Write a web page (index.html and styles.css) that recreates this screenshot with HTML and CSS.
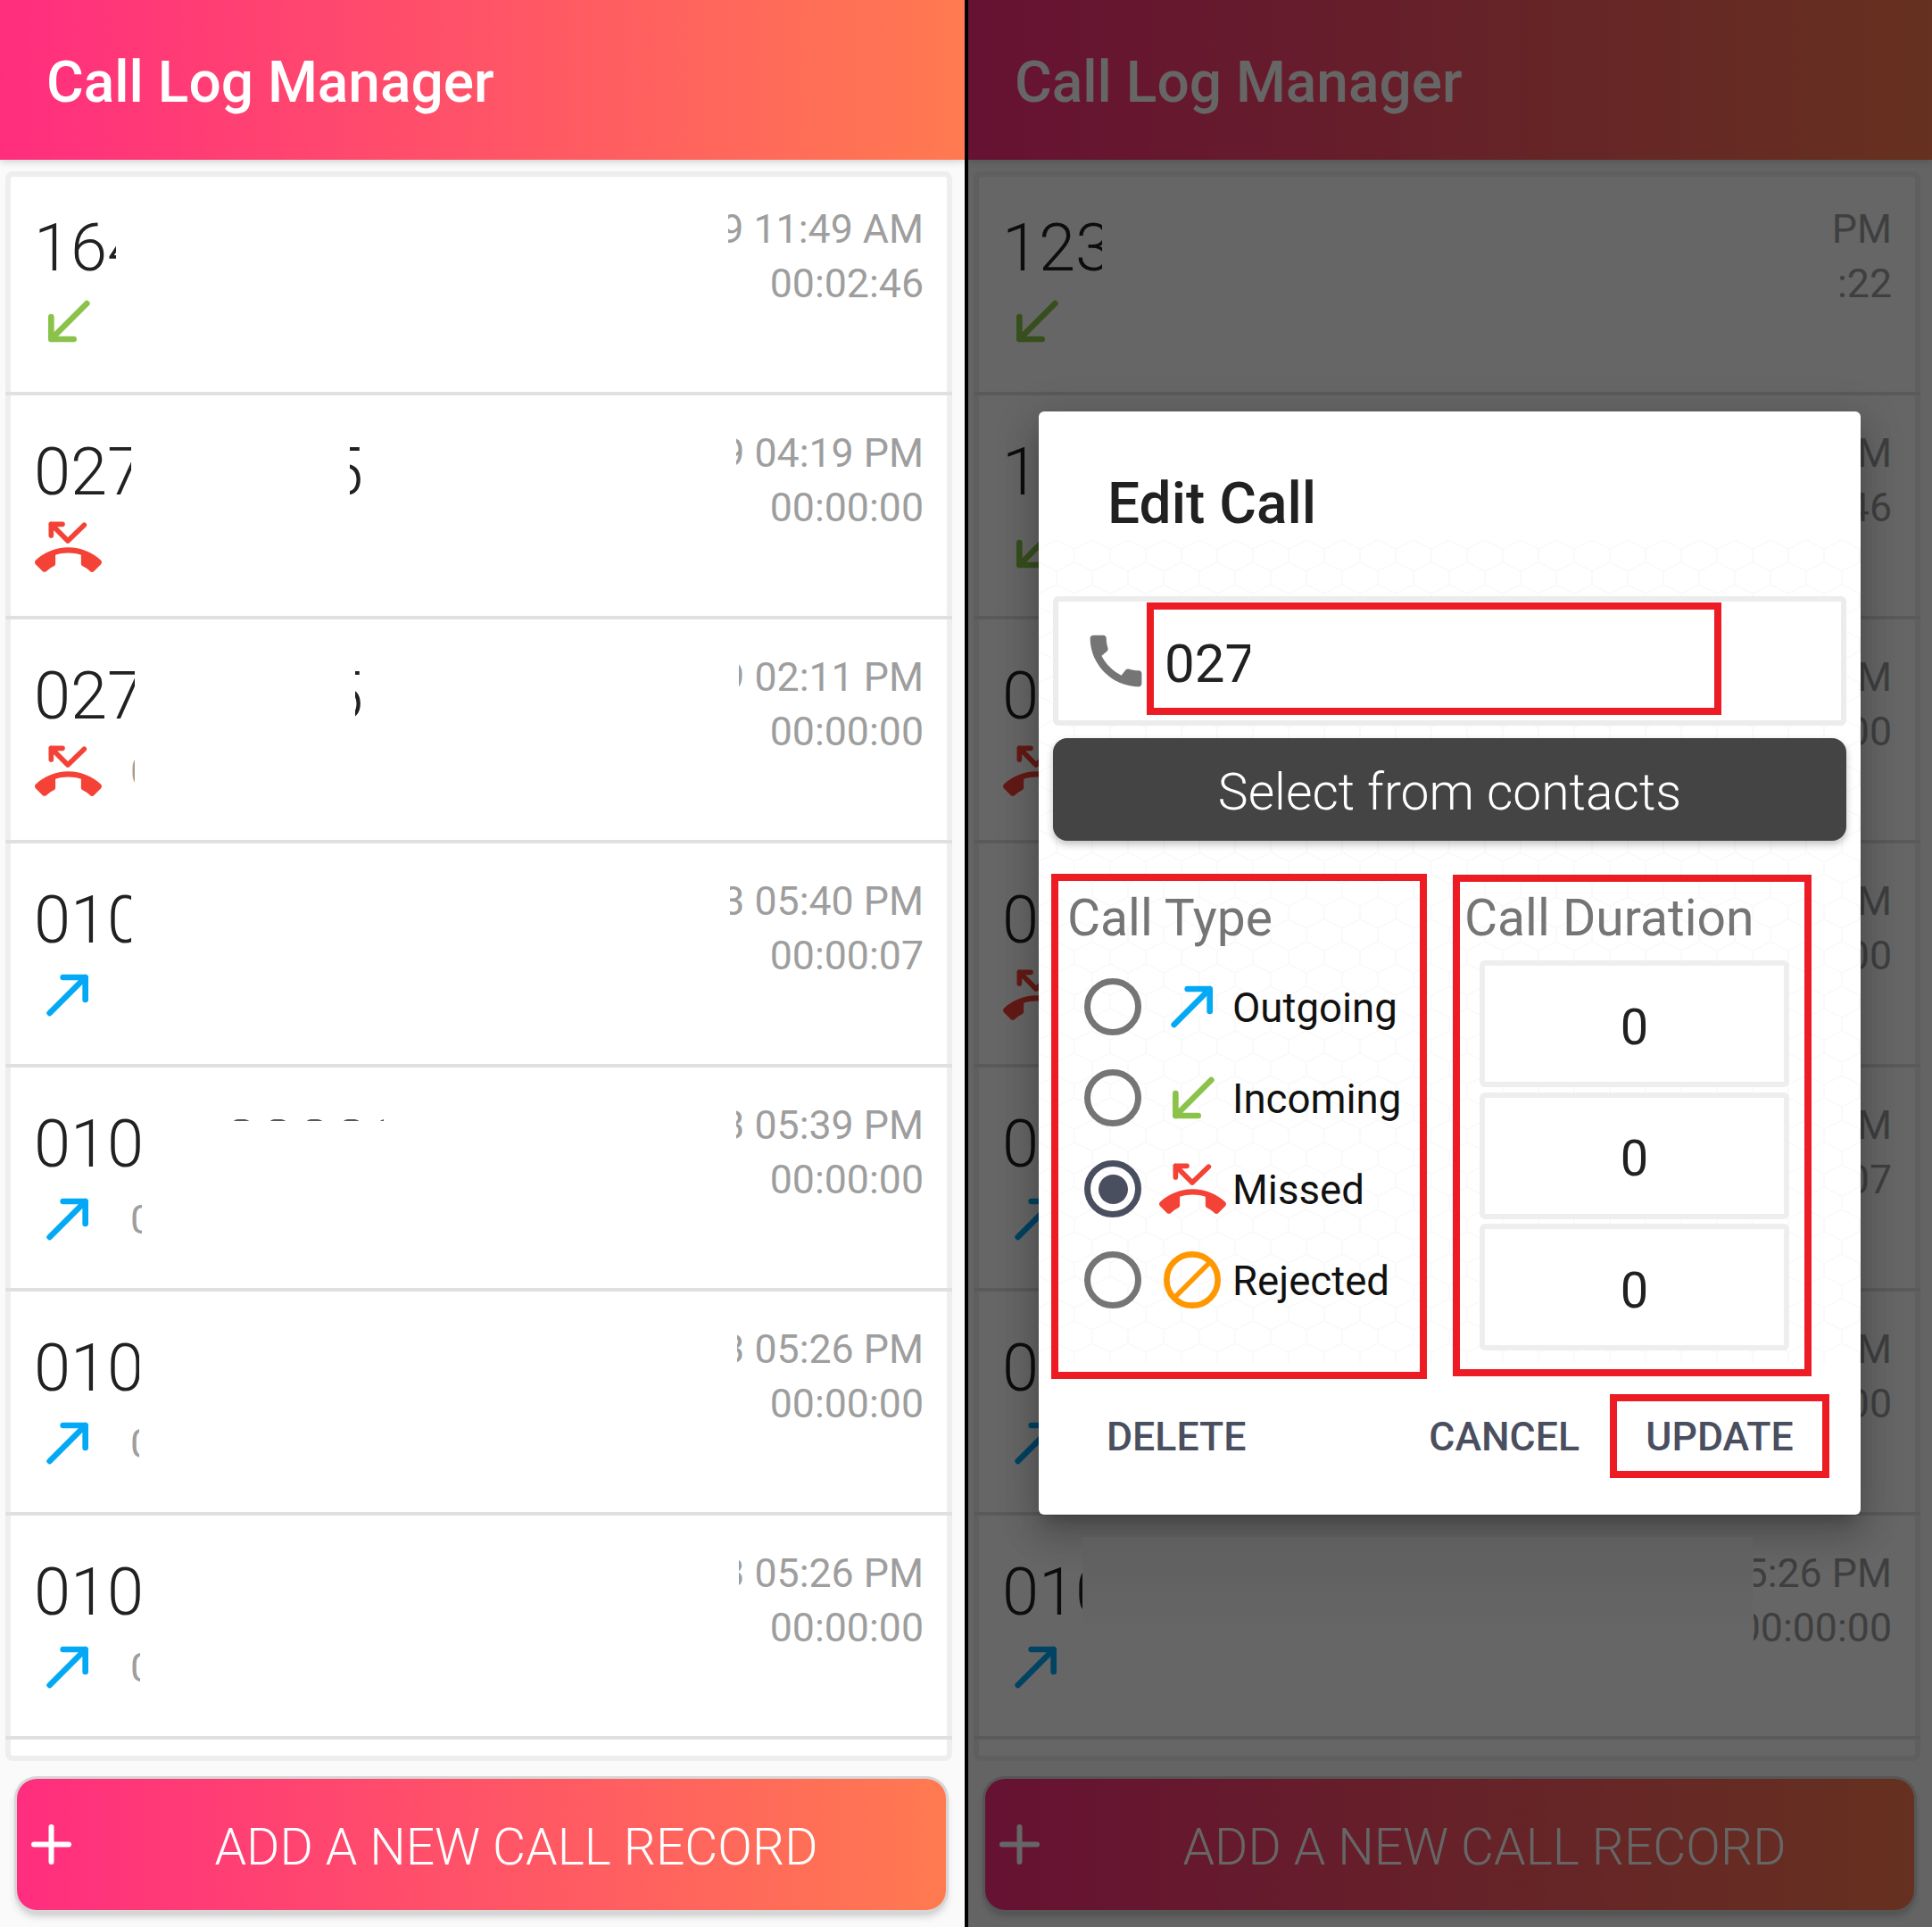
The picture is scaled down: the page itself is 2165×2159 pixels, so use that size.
FILE: index.html
```html
<!DOCTYPE html>
<html lang="en">
<head>
  <meta charset="UTF-8">
  <title>Call Log Manager</title>
  <link rel="stylesheet" href="styles.css">
</head>
<body>
  <svg class="sprite">
    <symbol id="ic-out" viewBox="108 109 240 192">
      <path d="M167 265L287 145M212 145H287V220" fill="none" stroke="#03a9f4" stroke-width="20" stroke-linecap="round" stroke-linejoin="round"/>
    </symbol>
    <symbol id="ic-in" viewBox="108 409 240 192">
      <path d="M292 445L172 565M172 490V565H248" fill="none" stroke="#8bc34a" stroke-width="20" stroke-linecap="round" stroke-linejoin="round"/>
    </symbol>
    <symbol id="ic-missed" viewBox="108 718 240 192">
      <path d="M172 775V737H210M172 737L228 793L283 740" fill="none" stroke="#f44336" stroke-width="17" stroke-linecap="round" stroke-linejoin="round"/>
      <path transform="translate(117 749) scale(9.375)" fill="#f44336" d="M12 9c-1.6 0-3.15.25-4.6.72v3.1c0 .39-.23.74-.56.9-.98.49-1.87 1.12-2.66 1.85-.18.18-.43.28-.7.28-.28 0-.53-.11-.71-.29L.29 13.08c-.18-.17-.29-.42-.29-.7 0-.28.11-.53.29-.71C3.34 8.78 7.46 7 12 7s8.66 1.78 11.71 4.67c.18.18.29.43.29.71 0 .28-.11.53-.29.71l-2.48 2.48c-.18.18-.43.29-.71.29-.27 0-.52-.11-.7-.28-.79-.74-1.69-1.36-2.67-1.85-.33-.16-.56-.5-.56-.9v-3.1C15.15 9.25 13.6 9 12 9z"/>
    </symbol>
    <symbol id="ic-rejected" viewBox="109 1024 240 192">
      <circle cx="229" cy="1120" r="86" fill="none" stroke="#ff9800" stroke-width="20"/>
      <path d="M172 1177L286 1063" fill="none" stroke="#ff9800" stroke-width="16"/>
    </symbol>
    <symbol id="ic-plus" viewBox="0 0 45 45">
      <path d="M22.5 3V42M3 22.5H42" fill="none" stroke="#fff" stroke-width="6" stroke-linecap="round"/>
    </symbol>
  </svg>

  <div class="screens">
    <!-- list screen -->
    <section class="panel">
      <header class="app-bar">Call Log Manager</header>
      <div class="list">
        <div class="list-inner">
          <div class="row">
            <div class="caller w93">
              <div class="num">164</div>
              <div class="sub"><svg class="ic"><use href="#ic-in"/></svg></div>
            </div>
            <div class="time t219"><div>9 11:49 AM</div><div>00:02:46</div></div>
          </div>
          <div class="row">
            <div class="caller w110">
              <div class="num">027</div>
              <div class="sub"><svg class="ic"><use href="#ic-missed"/></svg></div>
            </div>
            <div class="frag f15">5</div>
            <div class="time t210"><div>9 04:19 PM</div><div>00:00:00</div></div>
          </div>
          <div class="row">
            <div class="caller w114">
              <div class="num">027</div>
              <div class="sub"><svg class="ic"><use href="#ic-missed"/></svg><span class="sub-text">0</span></div>
            </div>
            <div class="frag f9">5</div>
            <div class="time t207"><div>9 02:11 PM</div><div>00:00:00</div></div>
          </div>
          <div class="row">
            <div class="caller w110">
              <div class="num">010</div>
              <div class="sub"><svg class="ic"><use href="#ic-out"/></svg></div>
            </div>
            <div class="time t217"><div>3 05:40 PM</div><div>00:00:07</div></div>
          </div>
          <div class="row">
            <div class="caller w122">
              <div class="num">010</div>
              <div class="sub"><svg class="ic"><use href="#ic-out"/></svg><span class="sub-text">0</span></div>
            </div>
            <div class="tops"><div class="tops-text">00000</div></div>
            <div class="time t210"><div>3 05:39 PM</div><div>00:00:00</div></div>
          </div>
          <div class="row">
            <div class="caller w119">
              <div class="num">010</div>
              <div class="sub"><svg class="ic"><use href="#ic-out"/></svg><span class="sub-text">0</span></div>
            </div>
            <div class="time t209"><div>3 05:26 PM</div><div>00:00:00</div></div>
          </div>
          <div class="row">
            <div class="caller w120">
              <div class="num">010</div>
              <div class="sub"><svg class="ic"><use href="#ic-out"/></svg><span class="sub-text">0</span></div>
            </div>
            <div class="time t207"><div>3 05:26 PM</div><div>00:00:00</div></div>
          </div>
        </div>
      </div>
      <button class="add-btn">
        <svg class="add-plus"><use href="#ic-plus"/></svg>
        <span class="add-label">ADD A NEW CALL RECORD</span>
      </button>
    </section>

    <div class="split"></div>

    <!-- same screen with the edit dialog open -->
    <section class="panel">
      <header class="app-bar">Call Log Manager</header>
      <div class="list">
        <div class="list-inner">
          <div class="row">
            <div class="caller w113">
              <div class="num">123</div>
              <div class="sub"><svg class="ic"><use href="#ic-in"/></svg></div>
            </div>
            <div class="time t80"><div>PM</div><div>:22</div></div>
          </div>
          <div class="row">
            <div class="caller w110">
              <div class="num">1</div>
              <div class="sub"><svg class="ic"><use href="#ic-in"/></svg></div>
            </div>
            <div class="time t80"><div>PM</div><div>:46</div></div>
          </div>
          <div class="row">
            <div class="caller w110">
              <div class="num">0</div>
              <div class="sub"><svg class="ic"><use href="#ic-missed"/></svg></div>
            </div>
            <div class="time t80"><div>PM</div><div>:00</div></div>
          </div>
          <div class="row">
            <div class="caller w110">
              <div class="num">0</div>
              <div class="sub"><svg class="ic"><use href="#ic-missed"/></svg></div>
            </div>
            <div class="time t80"><div>PM</div><div>:00</div></div>
          </div>
          <div class="row">
            <div class="caller w110">
              <div class="num">0</div>
              <div class="sub"><svg class="ic"><use href="#ic-out"/></svg></div>
            </div>
            <div class="time t80"><div>PM</div><div>:07</div></div>
          </div>
          <div class="row">
            <div class="caller w110">
              <div class="num">0</div>
              <div class="sub"><svg class="ic"><use href="#ic-out"/></svg></div>
            </div>
            <div class="time t80"><div>PM</div><div>:00</div></div>
          </div>
          <div class="row">
            <div class="caller w91">
              <div class="num">010</div>
              <div class="sub"><svg class="ic"><use href="#ic-out"/></svg></div>
            </div>
            <div class="time t155"><div>05:26 PM</div><div>00:00:00</div></div>
          </div>
        </div>
      </div>
      <button class="add-btn">
        <svg class="add-plus"><use href="#ic-plus"/></svg>
        <span class="add-label">ADD A NEW CALL RECORD</span>
      </button>

      <div class="scrim">
        <div class="dialog">
          <svg class="hex-bg" width="921" height="922">
            <defs>
              <pattern id="hex" width="40" height="50" patternUnits="userSpaceOnUse">
                <path d="M0 10L20 0L40 10M0 10V25M40 10V25M0 25L20 35L40 25M20 35V50" fill="none" stroke="#f9f9f9" stroke-width="1.5"/>
              </pattern>
            </defs>
            <rect width="921" height="922" fill="url(#hex)"/>
          </svg>

          <h2 class="dialog-title">Edit Call</h2>

          <div class="phone-card">
            <svg class="phone-ic" viewBox="0 0 24 24"><path fill="#757575" d="M20.01 15.38c-1.23 0-2.42-.2-3.53-.56-.35-.12-.74-.03-1.01.24l-1.57 1.97c-2.83-1.35-5.48-3.9-6.89-6.83l1.95-1.66c.27-.28.35-.67.24-1.02-.37-1.11-.56-2.3-.56-3.53 0-.54-.45-.99-.99-.99H4.19C3.65 3 3 3.24 3 3.99 3 13.28 10.73 21 20.01 21c.71 0 .99-.63.99-1.18v-3.45c0-.54-.45-.99-.99-.99z"/></svg>
            <div class="phone-input mark"><span class="phone-num">027</span></div>
          </div>

          <button class="contacts-btn">Select from contacts</button>

          <div class="columns">
            <div class="type-col mark">
              <div class="col-label">Call Type</div>
              <div class="type-list">
                <div class="type-row">
                  <span class="radio"></span>
                  <svg class="ic"><use href="#ic-out"/></svg>
                  <span class="type-name">Outgoing</span>
                </div>
                <div class="type-row">
                  <span class="radio"></span>
                  <svg class="ic"><use href="#ic-in"/></svg>
                  <span class="type-name">Incoming</span>
                </div>
                <div class="type-row">
                  <span class="radio radio-on"></span>
                  <svg class="ic"><use href="#ic-missed"/></svg>
                  <span class="type-name">Missed</span>
                </div>
                <div class="type-row">
                  <span class="radio"></span>
                  <svg class="ic"><use href="#ic-rejected"/></svg>
                  <span class="type-name">Rejected</span>
                </div>
              </div>
            </div>
            <div class="dur-col mark">
              <div class="col-label">Call Duration</div>
              <div class="dur-list">
                <div class="dur-box">0</div>
                <div class="dur-box">0</div>
                <div class="dur-box">0</div>
              </div>
            </div>
          </div>

          <div class="actions">
            <span class="action action-delete">DELETE</span>
            <span class="action action-cancel">CANCEL</span>
            <span class="action action-update mark">UPDATE</span>
          </div>
        </div>
        <div class="patch"></div>
      </div>
    </section>
  </div>
</body>
</html>
```

FILE: styles.css
```css
* { box-sizing: border-box; }
html, body { margin: 0; padding: 0; }
body {
  font-family: Roboto, "Liberation Sans", sans-serif;
  background-color: #000;
  width: 2165px;
  height: 2159px;
  overflow: hidden;
}
.sprite { display: none; }
.screens {
  display: grid;
  grid-template-columns: 1081px 4px 1080px;
  height: 2159px;
}
.split { background-color: #000; }
.panel {
  position: relative;
  display: flex;
  flex-direction: column;
  background-color: #fafafa;
  overflow: hidden;
}

.app-bar {
  height: 179px;
  flex: none;
  display: flex;
  align-items: center;
  padding: 5px 0 0 52px;
  font-size: 64px;
  font-weight: 500;
  color: #fff;
  background: linear-gradient(to right, #ff2d7e, #ff7a50);
  box-shadow: 0 2px 8px rgba(0,0,0,0.18);
}

.list {
  margin: 13px 14px 0 6px;
  width: 1061px;
  height: 1781px;
  flex: none;
  padding: 6px;
  background-color: #eeeeee;
  border-radius: 8px;
}
.list-inner {
  display: flow-root;
  height: 100%;
  background-color: #fff;
  border-radius: 3px;
}
.row {
  display: flex;
  height: 251px;
  margin: 0 -6px;
  padding: 34px 32px 0 31px;
  border-bottom: 4px solid #e0e0e0;
}
.row:first-child { margin-top: -6px; }
.row:first-child .sub { margin-top: 8px; }

.caller {
  flex: none;
  height: 210px;
  overflow: hidden;
  white-space: nowrap;
}
.num {
  margin: 10px 0 0 1px;
  font-size: 74px;
  font-weight: 300;
  line-height: 84px;
  color: #212121;
}
.sub {
  display: flex;
  align-items: center;
  margin: 10px 0 0 -1px;
}
.ic { width: 80px; height: 64px; flex: none; }
.sub-text {
  margin-left: 30px;
  font-size: 45px;
  color: #9e9e9e;
}

/* what is left of the number past the blanked part */
.frag {
  flex: none;
  display: flex;
  justify-content: flex-end;
  align-self: flex-start;
  margin: 10px 0 0 245px;
  overflow: hidden;
  font-size: 74px;
  font-weight: 300;
  line-height: 84px;
  color: #212121;
}
.f15 { width: 15px; }
.f9 { width: 9px; margin-left: 247px; }
.tops {
  flex: none;
  width: 180px;
  height: 2px;
  margin: 24px 0 0 91px;
  overflow: hidden;
}
.tops-text {
  margin-top: -14px;
  font-size: 74px;
  font-weight: 300;
  line-height: 84px;
  color: #555;
}

.time {
  flex: none;
  display: flex;
  flex-direction: column;
  align-items: flex-end;
  margin: 1px 0 0 auto;
  height: 122px;
  overflow: hidden;
  white-space: nowrap;
  font-size: 44.7px;
  line-height: 61px;
  color: #9e9e9e;
}

.w91 { width: 91px; }
.w93 { width: 93px; }
.w110 { width: 110px; }
.w113 { width: 113px; }
.w114 { width: 114px; }
.w119 { width: 119px; }
.w120 { width: 120px; }
.w122 { width: 122px; }
.t80 { width: 80px; }
.t155 { width: 155px; }
.t207 { width: 207px; }
.t209 { width: 209px; }
.t210 { width: 210px; }
.t217 { width: 217px; }
.t219 { width: 219px; }

.add-btn {
  flex: none;
  display: flex;
  align-items: center;
  width: 1041px;
  height: 147px;
  margin: 20px 0 0 19px;
  padding: 0 0 0 16px;
  border: none;
  border-radius: 22px;
  background: linear-gradient(to right, #ff2d7e, #ff7a50);
  box-shadow: 0 0 0 3px #d6d6d6, 0 6px 10px rgba(0,0,0,0.22);
  color: #fff;
  font-family: inherit;
}
.add-plus { width: 45px; height: 45px; flex: none; }
.add-label {
  flex: 1;
  padding: 5px 0 0 17px;
  font-size: 57px;
  font-weight: 300;
  text-align: center;
}

.scrim {
  position: absolute;
  top: 0;
  left: 0;
  width: 100%;
  height: 100%;
  padding: 0 1px 1px 0;
  background-color: rgba(0,0,0,0.6);
  display: flex;
  align-items: center;
  justify-content: center;
}
.dialog {
  position: relative;
  z-index: 0;
  width: 921px;
  height: 1236px;
  padding-top: 65px;
  background-color: #fff;
  border-radius: 6px;
  box-shadow: 0 24px 38px 3px rgba(0,0,0,0.14), 0 9px 46px 8px rgba(0,0,0,0.12), 0 11px 15px -7px rgba(0,0,0,0.2);
}
.hex-bg {
  position: absolute;
  top: 144px;
  left: 0;
  z-index: -1;
}
/* the blanked part of the last row also hides the dialog's shadow */
.patch {
  position: absolute;
  top: 1722px;
  left: 128px;
  width: 751px;
  height: 110px;
  background: linear-gradient(#5f5f5f, #666);
}
.dialog-title {
  margin: 1px 0 0 77px;
  font-size: 64px;
  font-weight: 500;
  line-height: 75px;
  color: #212121;
}

.mark { border: 8px solid #ed1c24; }

.phone-card {
  display: flex;
  align-items: flex-start;
  height: 145px;
  margin: 66px 16px 0;
  border: 6px solid #ececec;
  border-radius: 6px;
  background-color: #fff;
}
.phone-ic {
  width: 77px;
  height: 77px;
  flex: none;
  margin: 28px -4px 0 26px;
}
.phone-input {
  display: flex;
  align-items: center;
  width: 644px;
  height: 126px;
  margin-top: 1px;
  padding: 10px 0 0 12px;
  font-size: 60px;
  color: #212121;
}
.phone-num {
  display: block;
  width: 96px;
  overflow: hidden;
}
.contacts-btn {
  display: block;
  width: 889px;
  height: 115px;
  margin: 14px 16px 0;
  padding: 5px 0 0;
  border: none;
  border-radius: 16px;
  background-color: #444;
  box-shadow: 0 4px 8px rgba(0,0,0,0.25);
  color: #fff;
  font-family: inherit;
  font-size: 57px;
  font-weight: 300;
}

.columns {
  display: flex;
  align-items: flex-start;
  gap: 29px;
  margin: 37px 0 0 14px;
}
.type-col {
  width: 421px;
  height: 566px;
  padding: 8px 0 0 10px;
}
.dur-col {
  width: 402px;
  height: 562px;
  margin-top: 1px;
  padding: 7px 0 0 5px;
}
.col-label {
  padding-top: 2px;
  font-size: 57px;
  line-height: 64px;
  color: #757575;
}
.type-list { margin: 16px 0 0 19px; }
.type-row {
  display: flex;
  align-items: center;
  height: 102px;
}
.radio {
  flex: none;
  display: flex;
  align-items: center;
  justify-content: center;
  width: 64px;
  height: 64px;
  margin-right: 17px;
  border: 7px solid #757575;
  border-radius: 50%;
}
.radio-on { border-color: #4a4f60; }
.radio-on::after {
  content: "";
  width: 33px;
  height: 33px;
  border-radius: 50%;
  background-color: #4a4f60;
}
.type-name {
  margin-left: 5px;
  padding-top: 2px;
  font-size: 45.6px;
  color: #111;
}
.dur-list {
  display: flex;
  flex-direction: column;
  gap: 5.5px;
  width: 347px;
  margin: 15px 0 0 17px;
}
.dur-box {
  display: flex;
  align-items: center;
  justify-content: center;
  height: 142px;
  padding-top: 7px;
  border: 6px solid #eeeeee;
  border-radius: 6px;
  background-color: #fff;
  font-size: 56px;
  color: #212121;
}

.actions {
  display: flex;
  align-items: center;
  height: 94px;
  margin-top: 17px;
  padding: 0 35px 0 76px;
  font-size: 44.6px;
  font-weight: 500;
  color: #4a4f60;
}
.action { padding-top: 2px; }
.action-delete { margin-right: auto; }
.action-cancel { margin-right: 34px; }
.action-update {
  display: flex;
  align-items: center;
  justify-content: center;
  width: 246px;
  height: 94px;
}
```
